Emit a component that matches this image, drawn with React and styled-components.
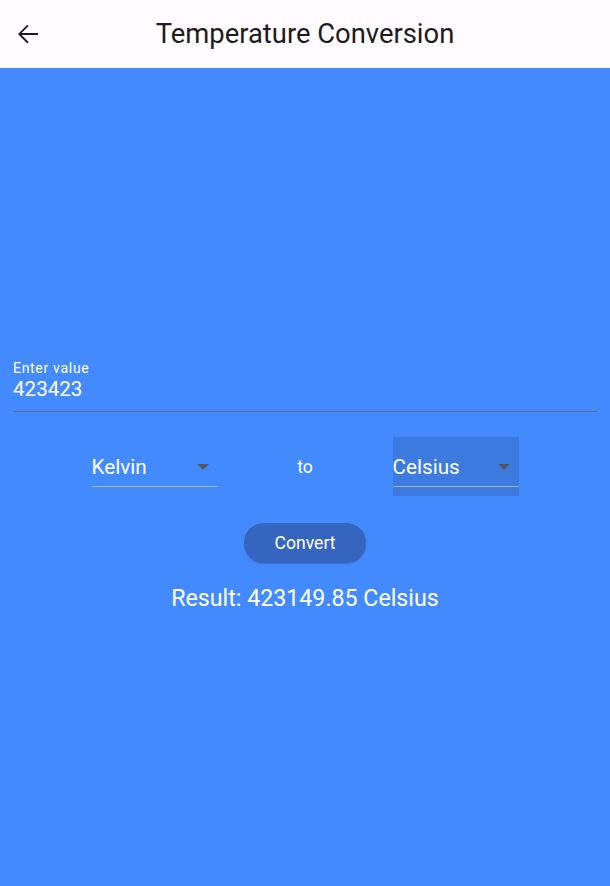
import React from 'react'
import styled, { createGlobalStyle } from 'styled-components'

const GlobalStyle = createGlobalStyle`
  body {
    margin: 0;
    font-family: Roboto, "Noto Sans", sans-serif;
  }
`

const Page = styled.div`
  width: 610px;
  height: 886px;
  display: flex;
  flex-direction: column;
  background: #448aff;
`

const AppBar = styled.header`
  height: 68px;
  flex-shrink: 0;
  background: #fffbfe;
  display: flex;
  align-items: center;
`

const BackButton = styled.button`
  border: none;
  background: none;
  padding: 0;
  margin-left: 13px;
  width: 30px;
  height: 30px;
  display: flex;
  cursor: pointer;
`

const Title = styled.h1`
  flex: 1;
  margin: 0 43px 0 0;
  text-align: center;
  font-size: 27.4px;
  font-weight: 400;
  color: #1d1b20;
`

const Body = styled.main`
  flex: 1;
  display: flex;
  flex-direction: column;
  padding: 292px 13px 0 13px;
  color: #fff;
`

const Field = styled.div`
  display: flex;
  flex-direction: column;
`

const Label = styled.div`
  font-size: 14px;
  line-height: 16px;
  letter-spacing: 0.7px;
`

const Value = styled.div`
  font-size: 20.6px;
  line-height: 26px;
  margin-bottom: 9px;
`

const Underline = styled.div`
  height: 1px;
  flex-shrink: 0;
  background: ${p => p.$color};
`

const Row = styled.div`
  display: flex;
  align-items: center;
  justify-content: center;
  margin-top: 25px;
`

const Select = styled.div`
  width: 126px;
  height: 59px;
  display: flex;
  flex-direction: column;
  justify-content: flex-end;
  background: ${p => (p.$focused ? '#3d7be0' : 'transparent')};
`

const SelectInner = styled.div`
  display: flex;
  align-items: center;
  justify-content: space-between;
  font-size: 20.7px;
  height: 39px;
  padding-top: 9px;
`

const SelectBottom = styled.div`
  margin-bottom: 9px;
`

const Caret = styled.span`
  width: 0;
  height: 0;
  border-left: 6px solid transparent;
  border-right: 6px solid transparent;
  border-top: 6px solid #55595f;
  margin-right: 9px;
`

const To = styled.div`
  width: 175px;
  text-align: center;
  font-size: 17.5px;
`

const Button = styled.button`
  align-self: center;
  margin-top: 27px;
  width: 122px;
  height: 40px;
  border: none;
  border-radius: 20px;
  background: #3565be;
  color: #fff;
  font-family: Roboto, sans-serif;
  font-size: 17.6px;
  box-shadow: 0 1px 2px rgba(0, 0, 0, 0.2);
`

const Result = styled.div`
  text-align: center;
  font-size: 23.2px;
  line-height: 27px;
  margin-top: 22px;
`

const DropDown = ({ value, focused }) => (
  <Select $focused={focused}>
    <SelectInner>
      {value}
      <Caret />
    </SelectInner>
    <SelectBottom>
      <Underline $color="#a6b2c8" />
    </SelectBottom>
  </Select>
)

export default function App() {
  return (
    <Page>
      <GlobalStyle />
      <AppBar>
        <BackButton>
          <svg width="30" height="30" viewBox="0 0 24 24">
            <path d="M20 11.2H6.9l5.6-5.6L11.4 4.5 4 12l7.4 7.5 1.1-1.1-5.6-5.6H20v-1.6z" fill="#1d1b20" />
          </svg>
        </BackButton>
        <Title>Temperature Conversion</Title>
      </AppBar>
      <Body>
        <Field>
          <Label>Enter value</Label>
          <Value>423423</Value>
          <Underline $color="#616a84" />
        </Field>
        <Row>
          <DropDown value="Kelvin" />
          <To>to</To>
          <DropDown value="Celsius" focused />
        </Row>
        <Button>Convert</Button>
        <Result>Result: 423149.85 Celsius</Result>
      </Body>
    </Page>
  )
}
